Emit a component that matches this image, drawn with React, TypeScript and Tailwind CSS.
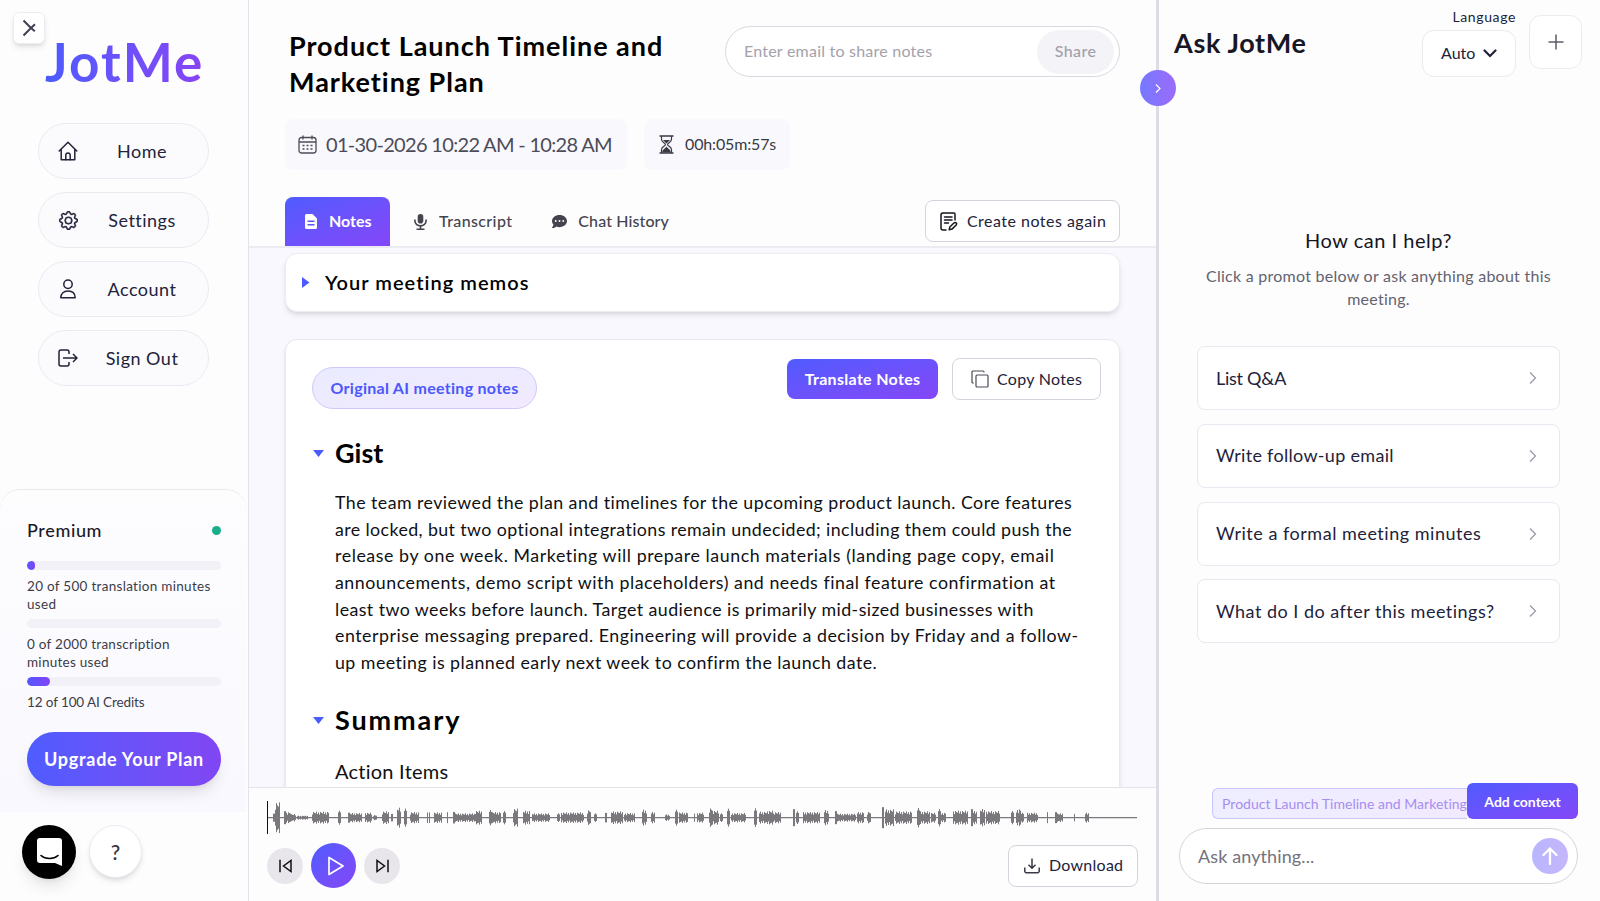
import type { ReactNode } from 'react';
import { BsGear } from 'react-icons/bs';
import { FaCommentDots } from 'react-icons/fa6';

const navItems = [
  { label: 'Home', icon: <HomeIcon /> },
  { label: 'Settings', icon: <BsGear size={19} stroke="currentColor" strokeWidth={0.4} /> },
  { label: 'Account', icon: <UserIcon /> },
  { label: 'Sign Out', icon: <SignOutIcon /> },
];

const usage = [
  { lines: ['20 of 500 translation minutes', 'used'], percent: 4, tracking: 'tracking-[0.022em]' },
  { lines: ['0 of 2000 transcription', 'minutes used'], percent: 0, tracking: 'tracking-[0.020em]' },
  { lines: ['12 of 100 AI Credits'], percent: 12, tracking: 'tracking-[-0.008em]' },
];

const gist = [
  { text: 'The team reviewed the plan and timelines for the upcoming product launch. Core features', tracking: 'tracking-[0.450px]' },
  { text: 'are locked, but two optional integrations remain undecided; including them could push the', tracking: 'tracking-[0.400px]' },
  { text: 'release by one week. Marketing will prepare launch materials (landing page copy, email', tracking: 'tracking-[0.570px]' },
  { text: 'announcements, demo script with placeholders) and needs final feature confirmation at', tracking: 'tracking-[0.520px]' },
  { text: 'least two weeks before launch. Target audience is primarily mid-sized businesses with', tracking: 'tracking-[0.430px]' },
  { text: 'enterprise messaging prepared. Engineering will provide a decision by Friday and a follow-', tracking: 'tracking-[0.520px]' },
  { text: 'up meeting is planned early next week to confirm the launch date.', tracking: 'tracking-[0.460px]' },
];

const prompts = [
  { text: 'List Q&A', tracking: 'tracking-[-0.015em]' },
  { text: 'Write follow-up email', tracking: 'tracking-[0.017em]' },
  { text: 'Write a formal meeting minutes', tracking: 'tracking-[0.029em]' },
  { text: 'What do I do after this meetings?', tracking: 'tracking-[0.027em]' },
];

// [start, end, peak] of every burst of speech, in thirds of a pixel
const bursts: [number, number, number][] = [
  [68, 74, 16], [74, 88, 46], [88, 92, 16], [102, 108, 26], [108, 124, 17], [124, 140, 11], [140, 172, 6],
  [186, 236, 18], [264, 273, 21], [294, 300, 20], [300, 336, 14], [346, 366, 15], [368, 380, 8], [396, 416, 19],
  [424, 430, 15], [440, 452, 30], [462, 470, 27], [480, 508, 17], [530, 533, 21], [538, 541, 21], [551, 575, 16],
  [592, 596, 22], [609, 614, 23], [614, 674, 13], [676, 698, 21], [716, 724, 23], [726, 752, 17], [760, 770, 20],
  [788, 802, 27], [818, 838, 21], [846, 900, 13], [920, 930, 13], [934, 1002, 16], [1012, 1024, 23], [1032, 1040, 13],
  [1066, 1072, 19], [1084, 1120, 19], [1122, 1156, 14], [1176, 1190, 24], [1204, 1216, 17], [1246, 1262, 10],
  [1274, 1284, 24], [1286, 1312, 16], [1332, 1336, 16], [1340, 1360, 15], [1376, 1388, 29], [1390, 1408, 21],
  [1410, 1420, 13], [1432, 1440, 27], [1444, 1490, 14], [1512, 1522, 28], [1526, 1550, 18], [1550, 1570, 21],
  [1572, 1592, 17], [1630, 1636, 34], [1638, 1648, 19], [1660, 1710, 17], [1722, 1738, 23], [1756, 1762, 26],
  [1762, 1820, 12], [1820, 1842, 17], [1852, 1864, 18], [1896, 1902, 42], [1904, 1930, 25], [1936, 1986, 19],
  [2000, 2010, 29], [2010, 2040, 19], [2042, 2056, 15], [2064, 2072, 26], [2074, 2088, 15], [2110, 2154, 21],
  [2164, 2170, 34], [2170, 2182, 20], [2190, 2206, 26], [2208, 2250, 20], [2282, 2290, 20], [2298, 2312, 26],
  [2314, 2322, 15], [2332, 2364, 15], [2392, 2396, 22], [2414, 2420, 22], [2420, 2438, 13], [2472, 2476, 15],
  [2506, 2518, 15],
];

const jitter = [0.72, 1, 0.6, 0.88, 0.52, 0.95, 0.8];

export default function App() {
  return (
    <div className="flex h-[901px] w-[1600px] overflow-hidden bg-[#fdfdfe] font-[Lato,sans-serif] text-[#22223a] whitespace-nowrap">
      <Sidebar />
      <Meeting />
      <AskPanel />
    </div>
  );
}

function Sidebar() {
  return (
    <aside className="relative flex w-[249px] shrink-0 flex-col border-r border-[#e4e3ec]">
      <button className="absolute top-3 left-[13px] flex h-8 w-8 items-center justify-center rounded-md border border-[#ececf2] bg-white shadow-md">
        <svg width="14" height="18" viewBox="0 0 14 18" fill="none" stroke="#3f3f50" strokeWidth="2">
          <path d="M1.500 1.500 9 9l-7.500 7.500" />
          <path d="M13 5.200 9 9l3.800 3.200" />
        </svg>
      </button>

      <div className="mt-[29px] ml-[45px] h-[66px] w-[160px] bg-linear-to-r from-[#4a5bff] to-[#8743f5] bg-clip-text text-[53px] leading-[66px] font-bold tracking-[0.039em] text-transparent">
        JotMe
      </div>

      <nav className="mt-[28px] flex flex-col gap-[13px] pr-[39px] pl-[38px]">
        {navItems.map((item) => (
          <button
            key={item.label}
            className="flex h-14 items-center rounded-full border border-[#ebeaf2] bg-[#fbfbfe] pr-[18px] pl-[19px] text-[18px]"
          >
            <span className="flex w-5 shrink-0 justify-center">{item.icon}</span>
            <span className="flex-1 pl-[16px] text-center tracking-[0.027em]">{item.label}</span>
          </button>
        ))}
      </nav>

      <div className="mt-auto h-[323px] w-[246px] rounded-t-[20px] border-t border-[#e8e8ef] bg-linear-to-b from-[#fdfdfe] to-[#f9f8fe] pr-[25px] pl-[27px]">
        <div className="mt-[28px] flex h-6 items-center justify-between">
          <span className="text-[18px] font-medium tracking-[0.035em] text-[#1a1a28]">Premium</span>
          <span className="h-[9px] w-[9px] rounded-full bg-[#19ae8a]" />
        </div>
        <div className="mt-[19px]">
          {usage.map((row) => (
            <div key={row.lines[0]} className="mb-[6px]">
              <div className="h-[9px] overflow-hidden rounded-full bg-[#f2f1f7]">
                <div
                  className="h-full rounded-full bg-linear-to-r from-[#5356ff] to-[#7f44f6]"
                  style={{ width: `${row.percent}%` }}
                />
              </div>
              <p className={`mt-[7px] text-[13.500px] leading-[18px] text-[#3c3c48] ${row.tracking}`}>
                {row.lines.map((line) => (
                  <span key={line} className="block">{line}</span>
                ))}
              </p>
            </div>
          ))}
        </div>
        <button className="mt-[15px] h-[54px] w-[194px] rounded-full bg-linear-to-r from-[#4e5cff] to-[#8046f3] text-[18px] font-bold tracking-[0.040em] text-white shadow-lg">
          Upgrade Your Plan
        </button>
      </div>

      <div className="flex h-[89px] items-start gap-[13px] pt-[13px] pl-[22px]">
        <button className="flex h-[54px] w-[54px] items-center justify-center rounded-full bg-black shadow-lg">
          <svg width="25" height="28" viewBox="0 0 25 28">
            <path d="M3 0h19a3 3 0 0 1 3 3v25l-7-3H3a3 3 0 0 1-3-3V3a3 3 0 0 1 3-3Z" fill="#fff" />
            <path d="M4 17.500c4.500 4 12.500 4 17 0" fill="none" stroke="#000" strokeWidth="1.600" strokeLinecap="round" />
          </svg>
        </button>
        <button className="flex h-[53px] w-[53px] items-center justify-center rounded-full border border-[#eceaf3] bg-white text-[21px] font-medium text-[#33333e] shadow-md">
          ?
        </button>
      </div>
    </aside>
  );
}

function Meeting() {
  return (
    <main className="flex w-[907px] shrink-0 flex-col">
      <header className="h-[248px] shrink-0 border-b-2 border-[#ebebf1] pr-[36px] pl-[36px]">
        <div className="flex h-[100px] items-start justify-between pt-[26px]">
          <h1 className="mt-[2px] pl-[4px] text-[27px] leading-[36px] font-bold tracking-[0.036em] text-black">
            Product Launch Timeline and
            <br />
            Marketing Plan
          </h1>
          <div className="flex h-[51px] w-[395px] items-center justify-between rounded-full border border-[#d9d8e0] bg-white pr-[5px] pl-[18px]">
            <span className="pb-[2px] text-[16px] tracking-[0.014em] text-[#a3a2ac]">Enter email to share notes</span>
            <button className="h-[44px] w-[77px] rounded-full bg-[#f4f3f8] pb-[2px] text-[16px] font-medium tracking-[0.025em] text-[#a09fab]">
              Share
            </button>
          </div>
        </div>

        <div className="mt-[19px] flex gap-[17px]">
          <div className="flex h-[51px] w-[342px] items-center rounded-lg bg-[#f9f9fd] pl-[13px] text-[#4c4c58]">
            <CalendarIcon />
            <span className="pb-[2px] pl-[9px] text-[20px] tracking-[-0.034em]">01-30-2026 10:22 AM - 10:28 AM</span>
          </div>
          <div className="flex h-[51px] w-[146px] items-center rounded-lg bg-[#f9f9fd] pl-[15px] text-[#3a3a46]">
            <HourglassIcon />
            <span className="pb-[2px] pl-[11px] text-[16px] tracking-[-0.009em]">00h:05m:57s</span>
          </div>
        </div>

        <div className="mt-[27px] flex items-end">
          <button className="flex h-[49px] w-[105px] items-center rounded-t-lg bg-linear-to-br from-[#4e5bff] to-[#8446f8] pl-[20px] text-[16px] font-bold text-white">
            <svg width="12" height="15" viewBox="0 0 12 15">
              <path d="M1.500 0H7.500L12 4.500V13.500A1.500 1.500 0 0 1 10.500 15H1.500A1.500 1.500 0 0 1 0 13.500V1.500A1.500 1.500 0 0 1 1.500 0Z" fill="#fff" />
              <path d="M2.500 7.300h7M2.500 10.800h7" stroke="#5a55fc" strokeWidth="1.400" />
            </svg>
            <span className="pb-[2px] pl-[12px]">Notes</span>
          </button>
          <button className="flex h-[49px] items-center pl-[24px] text-[16px] font-medium tracking-[0.024em] text-[#44444f]">
            <MicIcon />
            <span className="pb-[2px] pl-[12px]">Transcript</span>
          </button>
          <button className="flex h-[49px] items-center pl-[40px] text-[16px] font-medium tracking-[0.007em] text-[#44444f]">
            <FaCommentDots size={15} />
            <span className="pb-[2px] pl-[11px]">Chat History</span>
          </button>
          <button className="mb-[4px] ml-auto flex h-[42px] w-[195px] items-center rounded-lg border border-[#d4d3dc] bg-white pl-[14px] text-[16px]">
            <NotesEditIcon />
            <span className="pb-px pl-[9px] tracking-[0.030em]">Create notes again</span>
          </button>
        </div>
      </header>

      <section className="flex h-[539px] flex-col overflow-hidden bg-[#f9f8fe] pt-[5px] pr-[36px] pl-[36px]">
        <div className="flex h-[59px] shrink-0 items-center rounded-xl border border-[#ecebf2] bg-white pl-[16px] shadow-md">
          <svg width="8" height="11" viewBox="0 0 8 11">
            <path d="M0 0l7.500 5.500L0 11Z" fill="#4b5bff" />
          </svg>
          <h2 className="pb-[2px] pl-[15px] text-[20px] font-semibold tracking-[0.052em] text-black">Your meeting memos</h2>
        </div>

        <article className="mt-[27px] h-[520px] shrink-0 rounded-xl border border-[#e8e7ef] bg-white pr-[18px] pl-[26px] shadow-md">
          <div className="flex pt-[18px]">
            <span className="mt-[9px] mb-px flex h-[42px] w-[225px] items-center justify-center rounded-full border border-[#cfcafc] bg-linear-to-br from-[#eaebff] to-[#f2eafe] pb-px text-[16px] font-bold tracking-[0.018em] text-[#4b58fb]">
              Original AI meeting notes
            </span>
            <button className="ml-auto mt-px h-[40px] w-[151px] rounded-lg bg-linear-to-br from-[#4e5bff] to-[#8446f8] pb-px text-[16px] font-bold tracking-[0.020em] text-white">
              Translate Notes
            </button>
            <button className="ml-[14px] flex h-[42px] w-[149px] items-center rounded-lg border border-[#d4d3dc] bg-white pl-[18px] text-[16px]">
              <CopyIcon />
              <span className="pb-px pl-[8px] tracking-[0.018em]">Copy Notes</span>
            </button>
          </div>

          <SectionTitle className="mt-[25px]">Gist</SectionTitle>
          <div className="mt-[18px] pl-[23px] text-[17.800px] leading-[26.670px] text-[#101014]">
            {gist.map((line) => (
              <span key={line.text} className={`block ${line.tracking}`}>{line.text}</span>
            ))}
          </div>
          <SectionTitle className="mt-[27px] tracking-[1.900px]">Summary</SectionTitle>
          <p className="mt-[16px] pl-[23px] text-[20px] leading-[32px] tracking-[0.012em] text-[#101014]">Action Items</p>
        </article>
      </section>

      <footer className="h-[114px] shrink-0 border-t border-[#e4e3ea] pr-[18px] pl-[18px]">
        <Waveform />
        <div className="mt-[9px] flex items-center">
          <button className="flex h-9 w-9 items-center justify-center rounded-full bg-[#e8e6eb]">
            <svg width="13" height="14" viewBox="0 0 13 14" fill="none" stroke="#111" strokeWidth="1.500">
              <path d="M1 0.800v12.400M12 1.500v11L4.500 7Z" />
            </svg>
          </button>
          <button className="ml-[8px] flex h-[45px] w-[45px] items-center justify-center rounded-full bg-linear-to-br from-[#4e5bff] to-[#8446f8]">
            <svg width="16" height="20" viewBox="0 0 16 20" className="ml-[4px]" fill="none" stroke="#fff" strokeWidth="1.700" strokeLinejoin="round">
              <path d="M1 1.500v17L15 10Z" />
            </svg>
          </button>
          <button className="ml-[8px] flex h-9 w-9 items-center justify-center rounded-full bg-[#e8e6eb]">
            <svg width="13" height="14" viewBox="0 0 13 14" fill="none" stroke="#111" strokeWidth="1.500">
              <path d="M12 0.800v12.400M1 1.500v11L8.500 7Z" />
            </svg>
          </button>
          <button className="ml-auto flex h-[42px] w-[130px] items-center rounded-lg border border-[#d4d3dc] bg-white pl-[15px] text-[16px]">
            <svg width="16" height="16" viewBox="0 0 16 16" fill="none" stroke="#3a3a46" strokeWidth="1.500">
              <path d="M8 0.500v9.500M4.500 6.800 8 10.300l3.500-3.500M0.800 9.500v3.700a1.500 1.500 0 0 0 1.500 1.500h11.400a1.500 1.500 0 0 0 1.500-1.500V9.500" />
            </svg>
            <span className="pb-px pl-[9px] tracking-[0.016em]">Download</span>
          </button>
        </div>
      </footer>
    </main>
  );
}

function AskPanel() {
  return (
    <aside className="relative flex flex-1 flex-col border-l-[3px] border-[#dddce6]">
      <button className="absolute top-[70px] -left-[19px] flex h-9 w-9 items-center justify-center rounded-full bg-linear-to-r from-[#7479ff] to-[#9a6bfa]">
        <svg width="6" height="9" viewBox="0 0 6 9" fill="none" stroke="#fff" strokeWidth="1.200">
          <path d="M1 0.500l4 4-4 4" />
        </svg>
      </button>

      <div className="flex h-[80px] pr-[18px] pl-[15px]">
        <h2 className="pt-[25px] text-[27px] leading-[36px] font-bold tracking-[0.024em] text-[#171726]">Ask JotMe</h2>
        <div className="ml-auto w-[94px] pt-[7px]">
          <div className="text-right text-[14px] leading-[20px] tracking-[0.045em]">Language</div>
          <button className="mt-[3px] flex h-[47px] w-[94px] items-center rounded-[12px] border border-[#ebeaf1] bg-white pl-[18px] text-[16px]">
            <span className="pb-[2px] tracking-[0em]">Auto</span>
            <svg width="14" height="9" viewBox="0 0 14 9" className="ml-[8px]" fill="none" stroke="#22223a" strokeWidth="2.200" strokeLinecap="round">
              <path d="M1.500 1.500 7 7l5.500-5.500" />
            </svg>
          </button>
        </div>
        <button className="mt-[15px] ml-[13px] flex h-[54px] w-[53px] items-center justify-center rounded-[12px] border border-[#ebeaf1] bg-white">
          <svg width="16" height="16" viewBox="0 0 16 16" stroke="#5c5c68" strokeWidth="1.500">
            <path d="M8 0.500v15M0.500 8h15" />
          </svg>
        </button>
      </div>

      <div className="mt-[145px] pr-[2px] text-center">
        <h3 className="text-[20px] leading-[30px] tracking-[0.026em] text-[#15151f]">How can I help?</h3>
        <p className="mt-[10px] text-[16px] leading-[22.500px] tracking-[0.016em] text-[#63636f]">
          Click a promot below or ask anything about this
          <br />
          meeting.
        </p>
      </div>

      <div className="mt-[36px] flex flex-col gap-[13.800px] pr-[40px] pl-[38px]">
        {prompts.map((prompt) => (
          <button
            key={prompt.text}
            className="flex h-[64px] items-center justify-between rounded-lg border border-[#e9e8f0] bg-white pr-[22px] pl-[18px] text-[18px]"
          >
            <span className={prompt.tracking}>{prompt.text}</span>
            <svg width="8" height="12" viewBox="0 0 8 12" fill="none" stroke="#9a9aab" strokeWidth="1.300">
              <path d="M1 0.500 6.500 6 1 11.500" />
            </svg>
          </button>
        ))}
      </div>

      <div className="mt-auto flex h-[36px] items-end pr-[22px] pl-[53px]">
        <div className="h-[31px] w-[255px] rounded-l-md border border-r-0 border-[#c9c6ff] bg-linear-to-r from-[#eeeeff] to-[#f2eaff] pl-[9px] text-[14px] leading-[29px] tracking-[0.002em] text-[#a78df0]">
          Product Launch Timeline and Marketing
        </div>
        <button className="h-9 w-[111px] rounded-md bg-linear-to-br from-[#4e5bff] to-[#8446f8] text-[14px] font-bold text-white">
          Add context
        </button>
      </div>
      <div className="mt-[9px] mr-[22px] mb-[17px] ml-[20px] flex h-[56px] items-center justify-between rounded-full border border-[#d6d5dc] bg-white pr-[9px] pl-[18px]">
        <span className="text-[18px] tracking-[0.006em] text-[#73737c]">Ask anything...</span>
        <button className="flex h-9 w-9 items-center justify-center rounded-full bg-linear-to-r from-[#b9b6ff] to-[#c5b6fb]">
          <svg width="16" height="18" viewBox="0 0 16 18" fill="none" stroke="#fff" strokeWidth="2.300" strokeLinecap="round" strokeLinejoin="round">
            <path d="M8 17V1.500M1.500 8 8 1.500 14.500 8" />
          </svg>
        </button>
      </div>
    </aside>
  );
}

function SectionTitle({ children, className }: { children: ReactNode; className: string }) {
  return (
    <div className={`flex h-[36px] items-center ${className}`}>
      <svg width="11" height="7" viewBox="0 0 11 7" className="ml-[1px]">
        <path d="M0 0h11L5.500 7Z" fill="#4b5bff" />
      </svg>
      <h2 className="pl-[11px] text-[27px] font-bold text-black">{children}</h2>
    </div>
  );
}

function Waveform() {
  return (
    <svg width="870" height="33" viewBox="51 0 2610 99" className="mt-[13px] block">
      <path d="M51 50H2661" stroke="#7b787d" strokeWidth="4" />
      {bursts.map(([start, end, peak]) => {
        const left = Math.round(start / 3) * 3;
        const count = Math.max(1, Math.round((end - start) / 3));
        return Array.from({ length: count }, (_, i) => {
          const h = count < 4 ? peak * (i === 0 || i === count - 1 ? 0.75 : 1) : peak * jitter[(i + start) % jitter.length];
          return <rect key={`${start}-${i}`} x={left + i * 3} y={50 - h} width="3" height={h * 2} fill="#7b787d" />;
        });
      })}
      <path d="M52.500 0v99" stroke="#111" strokeWidth="3" />
    </svg>
  );
}

function HomeIcon() {
  return (
    <svg width="20" height="20" viewBox="0 0 20 20" fill="none" stroke="currentColor" strokeWidth="1.500" strokeLinejoin="round" strokeLinecap="round">
      <path d="M1.200 10 10 1.200 18.800 10M3.200 8.500V18.800H16.800V8.500" />
      <path d="M7.800 18.800v-4.600a2.200 2.200 0 0 1 4.400 0v4.600" />
    </svg>
  );
}

function UserIcon() {
  return (
    <svg width="18" height="20" viewBox="0 0 18 20" fill="none" stroke="currentColor" strokeWidth="1.500" strokeLinejoin="round">
      <circle cx="9" cy="5.300" r="4.200" />
      <path d="M1.800 18.800c0-4.500 3-6.800 7.200-6.800s7.200 2.300 7.200 6.800Z" />
    </svg>
  );
}

function SignOutIcon() {
  return (
    <svg width="20" height="18" viewBox="0 0 20 18" fill="none" stroke="currentColor" strokeWidth="1.500" strokeLinejoin="round">
      <path d="M11 5V3a2 2 0 0 0-2-2H3a2 2 0 0 0-2 2v12a2 2 0 0 0 2 2h6a2 2 0 0 0 2-2v-2" />
      <path d="M5 9h14M15 5l4 4-4 4" />
    </svg>
  );
}

function CalendarIcon() {
  return (
    <svg width="19" height="19" viewBox="0 0 19 19" className="shrink-0" fill="none" stroke="currentColor" strokeWidth="1.300">
      <rect x="1" y="2.500" width="17" height="15.500" rx="2.500" />
      <path d="M1 7h17M5 0.500v4M14 0.500v4" />
      <path d="M4.500 10.500h2M8.500 10.500h2M12.500 10.500h2M4.500 14h2M8.500 14h2M12.500 14h2" strokeWidth="1.500" />
    </svg>
  );
}

function HourglassIcon() {
  return (
    <svg width="15" height="19" viewBox="0 0 15 19" className="shrink-0" fill="none" stroke="currentColor" strokeWidth="1.200">
      <path d="M0.500 1h14M0.500 18h14" strokeWidth="1.600" />
      <path d="M2.500 1v3.500c0 2.500 4 3.500 4 5s-4 2.500-4 5V18M12.500 1v3.500c0 2.500-4 3.500-4 5s4 2.500 4 5V18" />
      <path d="M4 5h7L7.500 8.500ZM3.200 17.500c0-3.500 3-3.500 4.300-6 1.300 2.500 4.300 2.500 4.300 6Z" fill="currentColor" stroke="none" />
    </svg>
  );
}

function MicIcon() {
  return (
    <svg width="13" height="16" viewBox="0 0 13 16" className="shrink-0" fill="none" stroke="currentColor" strokeWidth="1.600">
      <rect x="3.700" y="0" width="5.600" height="9.500" rx="2.800" fill="currentColor" stroke="none" />
      <path d="M0.900 5.500v1.200a5.600 5.200 0 0 0 11.200 0V5.500M6.500 12v3.200M2.500 15.200h8" />
    </svg>
  );
}

function NotesEditIcon() {
  return (
    <svg width="18" height="19" viewBox="0 0 18 19" className="shrink-0" fill="none" stroke="#15151f" strokeWidth="1.500" strokeLinecap="round" strokeLinejoin="round">
      <path d="M6 18H3a2 2 0 0 1-2-2V3c0-1.200.8-2 2-2h11c.8 0 1 .7 1 1.500V8" />
      <path d="M4.500 5h7.500M4.500 8h7.500M4.500 11h4" />
      <path d="M9.200 17.800l.6-2.800 4.400-4.200c1.500-1 3 .5 2.200 2l-4.400 4.300Z" />
    </svg>
  );
}

function CopyIcon() {
  return (
    <svg width="18" height="18" viewBox="0 0 18 18" className="shrink-0" fill="none" stroke="#4a4a56" strokeWidth="1.200">
      <rect x="5" y="5" width="12" height="12" rx="1" />
      <path d="M2.800 13H2a1 1 0 0 1-1-1V2a1 1 0 0 1 1-1h10a1 1 0 0 1 1 1v.5" />
    </svg>
  );
}
